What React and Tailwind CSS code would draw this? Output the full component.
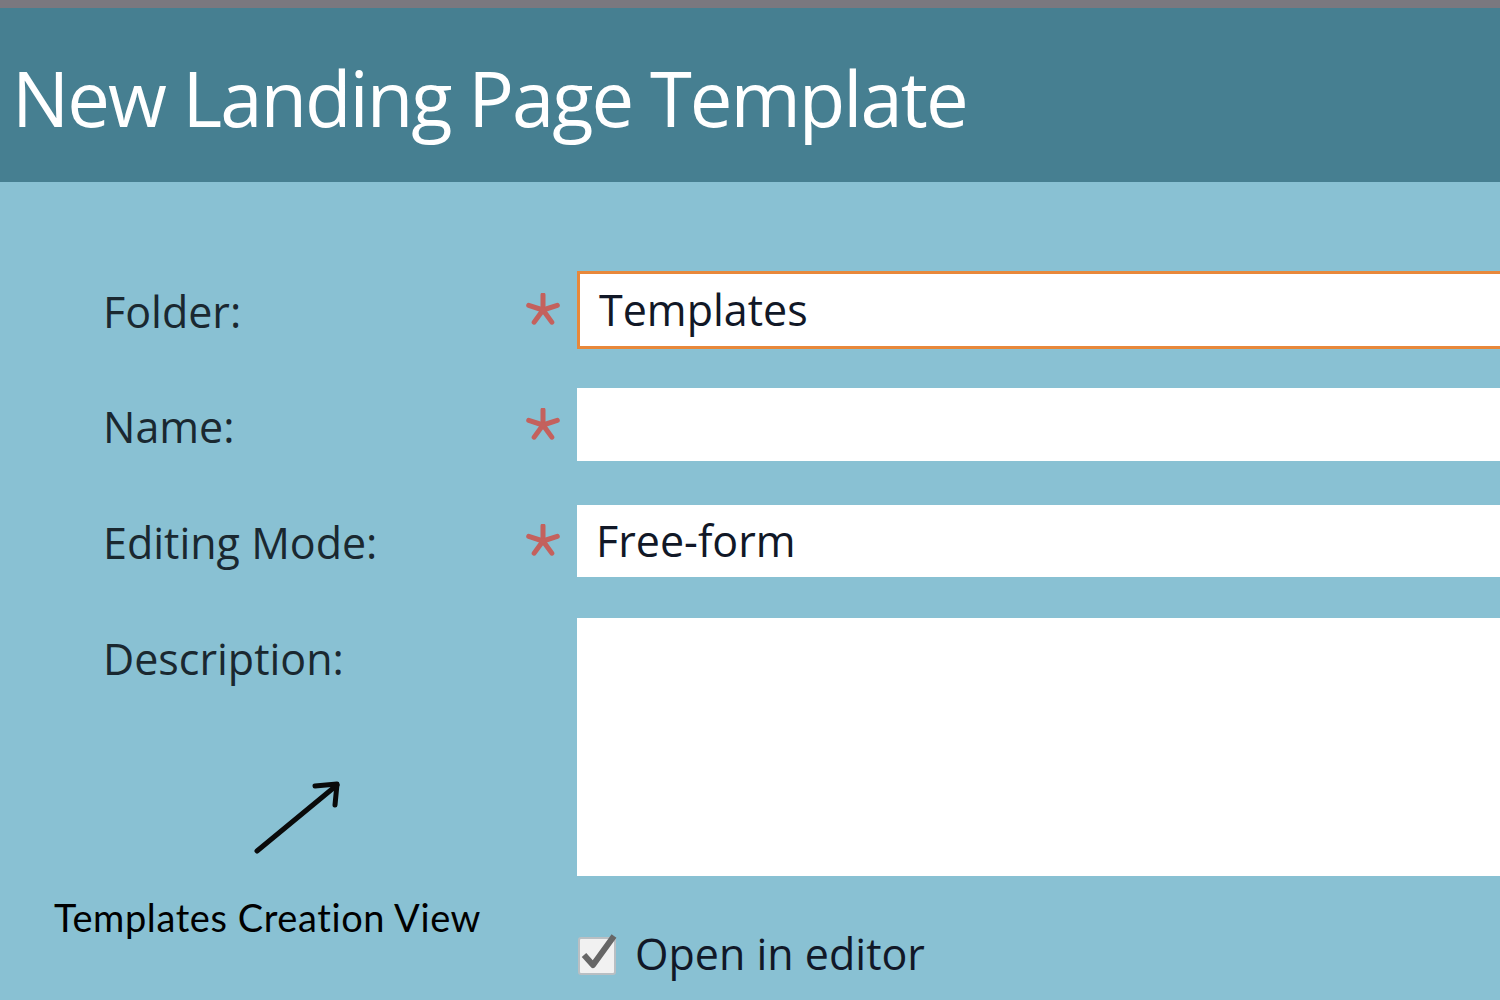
import React from 'react';

const UI_FONT = { fontFamily: '"Open Sans", "Noto Sans", sans-serif' };
const NOTE_FONT = { fontFamily: 'Lato, "Open Sans", sans-serif' };

function Asterisk() {
    // five-armed required marker
    const arms = [-90, -18, 54, 126, 198];
    return (
        <svg width="34" height="34" viewBox="-17 -17 34 34" className="shrink-0">
            {arms.map(a => {
                const r = (a * Math.PI) / 180;
                return (
                    <line
                        key={a}
                        x1="0"
                        y1="0"
                        x2={(15 * Math.cos(r)).toFixed(2)}
                        y2={(15 * Math.sin(r)).toFixed(2)}
                        stroke="#c4615d"
                        strokeWidth="5"
                        strokeLinecap="round"
                    />
                );
            })}
        </svg>
    );
}

function Field({ label, required, value, inputClass }) {
    return (
        <>
            <div className="flex items-center pt-[5px] text-[43px] text-[#1a2830]">
                {label}
            </div>
            <div className="flex items-center pr-[12px] justify-center">
                {required && <Asterisk />}
            </div>
            <div className={`bg-white flex items-center pl-[19px] text-[43px] text-[#111827] ${inputClass}`}>
                {value}
            </div>
        </>
    );
}

export default function App() {
    return (
        <div className="w-[1500px] h-[1000px] overflow-hidden bg-[#89c1d3]" style={UI_FONT}>
            <div className="h-[8px] bg-[#7a787f]" />
            <div className="h-[174px] bg-[#467f91] flex items-center pl-[12px] pt-[6px]">
                <h1 className="text-[76px] text-white leading-none tracking-[-2px]">New Landing Page Template</h1>
            </div>

            <div className="w-[1540px] pl-[103px] pt-[89px] grid grid-cols-[418px_56px_1fr] gap-x-0">
                <Field label="Folder:" required value="Templates" inputClass="h-[78px] border-[3px] border-[#e8883a] pl-[17px]" />
                <div className="col-span-3 h-[39px]" />
                <Field label="Name:" required value="" inputClass="h-[73px]" />
                <div className="col-span-3 h-[44px]" />
                <Field label="Editing Mode:" required value="Free-form" inputClass="h-[72px]" />
                <div className="col-span-3 h-[41px]" />

                <div className="flex flex-col text-[43px] text-[#1a2830]">
                    <span className="pt-[14px] leading-tight">Description:</span>
                    <svg width="90" height="76" viewBox="0 0 90 76" className="ml-[150px] mt-[93px]">
                        <path d="M4 72 L84 6" stroke="#0a0a0a" strokeWidth="5" strokeLinecap="round" />
                        <path d="M62 7 L84 5 L82 26" fill="none" stroke="#0a0a0a" strokeWidth="5" strokeLinecap="round" strokeLinejoin="round" />
                    </svg>
                </div>
                <div />
                <div className="bg-white h-[258px]" />

                <div className="-ml-[49px] pt-[22px] text-[38px] tracking-[0.6px] text-black leading-none" style={NOTE_FONT}>
                    Templates Creation View
                </div>
                <div />
                <div className="flex items-center pt-[46px] gap-[16px]">
                    <svg width="42" height="44" viewBox="0 0 42 44" className="shrink-0">
                        <rect x="2" y="6" width="36" height="36" rx="2" fill="#f1f1f1" stroke="#b9bfc3" strokeWidth="2" />
                        <path d="M7 23 L16 33 L37 4" fill="none" stroke="#666666" strokeWidth="6" strokeLinejoin="round" />
                    </svg>
                    <span className="text-[43px] text-[#111827]">Open in editor</span>
                </div>
            </div>
        </div>
    );
}
